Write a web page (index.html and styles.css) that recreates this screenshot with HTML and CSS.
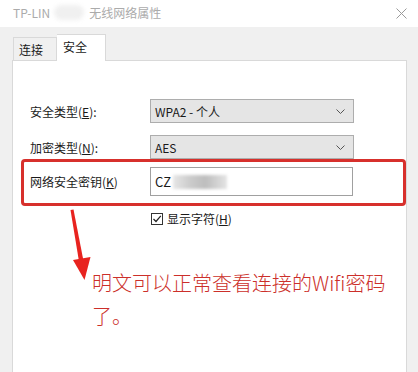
FILE: index.html
```html
<!DOCTYPE html>
<html lang="zh-CN">

<head>
    <meta charset="UTF-8">
    <title>无线网络属性</title>
    <link rel="stylesheet" href="styles.css">
</head>

<body>
    <div class="window">
        <div class="title-bar">
            <span class="title-text">TP-LIN</span>
            <span class="title-blur"></span>
            <span class="title-text">无线网络属性</span>
            <svg class="close-icon" width="11" height="11" viewBox="0 0 11 11">
                <path d="M0.5 0.5 L10.5 10.5 M10.5 0.5 L0.5 10.5" stroke="#9a9a9a" stroke-width="1" fill="none" />
            </svg>
        </div>

        <div class="body-area">
            <div class="tabs">
                <div class="tab">连接</div>
                <div class="tab tab-active">安全</div>
            </div>

            <div class="panel">
                <div class="form-row">
                    <label class="form-label">安全类型(<u>E</u>):</label>
                    <div class="select">
                        <span>WPA2 - 个人</span>
                        <svg class="chevron" width="9" height="5" viewBox="0 0 9 5">
                            <path d="M0.5 0.5 L4.5 4.5 L8.5 0.5" stroke="#555" stroke-width="1" fill="none" />
                        </svg>
                    </div>
                </div>
                <div class="form-row row-second">
                    <label class="form-label">加密类型(<u>N</u>):</label>
                    <div class="select">
                        <span>AES</span>
                        <svg class="chevron" width="9" height="5" viewBox="0 0 9 5">
                            <path d="M0.5 0.5 L4.5 4.5 L8.5 0.5" stroke="#555" stroke-width="1" fill="none" />
                        </svg>
                    </div>
                </div>
                <div class="form-row row-key">
                    <label class="form-label">网络安全密钥(<u>K</u>)</label>
                    <div class="key-input">
                        <span>CZ</span>
                        <span class="key-blur"></span>
                    </div>
                </div>
                <div class="check-row">
                    <span class="checkbox">
                        <svg width="10" height="10" viewBox="0 0 10 10">
                            <path d="M1.5 5 L4 7.5 L8.8 1.8" stroke="#222" stroke-width="1.2" fill="none" />
                        </svg>
                    </span>
                    <span>显示字符(<u>H</u>)</span>
                </div>

                <p class="note">明文可以正常查看连接的Wifi密码了。</p>

                <div class="highlight-box"></div>
                <svg class="arrow" width="100" height="240" viewBox="0 0 100 240">
                    <polygon points="57.5,149 60.5,148.5 70.5,200 66,200.5" fill="#e8231f" />
                    <polygon points="60,199 77.5,196 71.5,219" fill="#e8231f" />
                </svg>
            </div>
        </div>
    </div>
</body>

</html>
```

FILE: styles.css
```css
* {
    margin: 0;
    padding: 0;
    box-sizing: border-box;
}

body {
    font-family: "Noto Sans CJK SC", "Noto Sans", sans-serif;
    font-size: 12px;
    color: #1a1a1a;
    background: #ffffff;
}

.window {
    width: 418px;
    height: 372px;
    overflow: hidden;
}

.title-bar {
    height: 27px;
    background: #ffffff;
    display: flex;
    align-items: center;
    padding: 0 11px 2px 13px;
    position: relative;
}

.title-text {
    color: #ababab;
    font-size: 12px;
}

.title-blur {
    width: 30px;
    height: 15px;
    margin: 0 5px 0 4px;
    border-radius: 8px;
    background: #f0f0f0;
    filter: blur(2px);
}

.close-icon {
    margin-left: auto;
    margin-top: 2px;
}

.body-area {
    background: #f0f0f0;
    height: 345px;
    padding: 6px 11px 0 12px;
}

.tabs {
    display: flex;
    align-items: flex-end;
    height: 27px;
    padding-left: 1px;
}

.tab {
    height: 23px;
    width: 44px;
    border: 1px solid #d9d9d9;
    border-bottom: none;
    background: #f0f0f0;
    display: flex;
    align-items: center;
    padding-left: 5px;
}

.tab-active {
    height: 27px;
    width: 49px;
    margin-bottom: -1px;
    background: #ffffff;
    border-left: none;
    position: relative;
    z-index: 1;
    padding: 0 0 3px 6px;
}

.panel {
    position: relative;
    background: #ffffff;
    border: 1px solid #d9d9d9;
    height: 320px;
    padding: 38px 0 0 17px;
}

.form-row {
    display: flex;
    align-items: center;
}

.row-second {
    margin-top: 12px;
}

.row-key {
    margin-top: 8px;
}

.form-label {
    width: 120px;
}

.select {
    width: 204px;
    height: 24px;
    background: #e5e5e5;
    border: 1px solid #adadad;
    display: flex;
    align-items: center;
    padding: 0 8px 0 4px;
}

.chevron {
    margin-left: auto;
}

.key-input {
    width: 203px;
    height: 29px;
    background: #ffffff;
    border: 1px solid #a0a0a0;
    display: flex;
    align-items: center;
    padding: 0 4px;
    font-size: 13px;
}

.key-blur {
    width: 54px;
    height: 14px;
    margin-left: 2px;
    background: linear-gradient(90deg, #e6e6e6 0%, #c9c9c9 35%, #bdbdbd 60%, #e4e4e4 100%);
    filter: blur(1.5px);
}

.check-row {
    display: flex;
    align-items: center;
    margin: 14px 0 0 121px;
}

.checkbox {
    width: 12px;
    height: 12px;
    border: 1px solid #333333;
    display: flex;
    align-items: center;
    justify-content: center;
    margin-right: 4px;
    background: #ffffff;
}

.note {
    margin: 39px 0 0 62px;
    width: 300px;
    font-size: 20px;
    font-weight: 300;
    line-height: 33px;
    color: #cc2f2a;
}

.highlight-box {
    position: absolute;
    left: 8px;
    top: 98px;
    width: 385px;
    height: 47px;
    border: 3px solid #d7302c;
    border-radius: 4px;
}

.arrow {
    position: absolute;
    left: 0;
    top: 0;
}
```
